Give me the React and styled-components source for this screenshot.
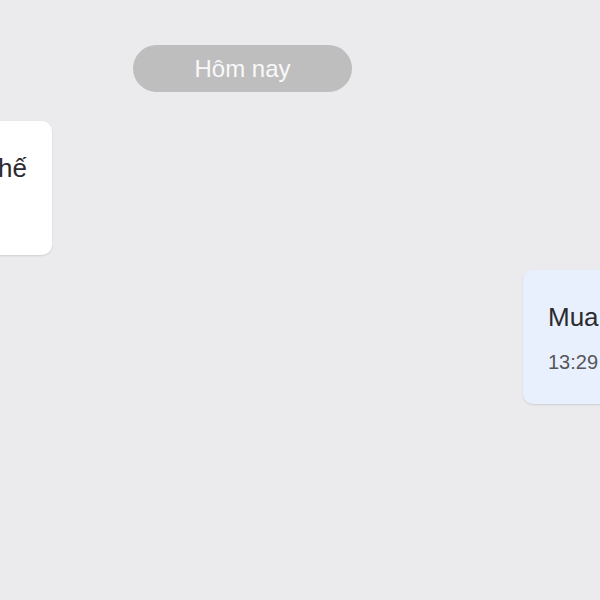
import React from "react";
import styled, { createGlobalStyle } from "styled-components";

const GlobalStyle = createGlobalStyle`
  html, body {
    margin: 0;
    padding: 0;
    background: #ebebee;
  }
  body {
    font-family: "Liberation Sans", Arial, sans-serif;
  }
`;

const Chat = styled.div`
  width: 600px;
  height: 600px;
  box-sizing: border-box;
  padding-top: 45px;
  background: #ebebee;
  overflow: hidden;
  display: flex;
  flex-direction: column;
`;

const DateRow = styled.div`
  display: flex;
  padding-left: 133px;
`;

const DatePill = styled.div`
  width: 219px;
  height: 47px;
  border-radius: 24px;
  background: #bebebf;
  color: #f9f9f9;
  font-size: 24px;
  display: flex;
  align-items: center;
  justify-content: center;
`;

const Row = styled.div`
  display: flex;
  justify-content: ${(p) => (p.$mine ? "flex-start" : "flex-end")};
  width: ${(p) => (p.$mine ? "auto" : "52px")};
  padding-left: ${(p) => (p.$mine ? "523px" : "0")};
  margin-top: ${(p) => p.$gap}px;
`;

const Bubble = styled.div`
  flex-shrink: 0;
  box-sizing: border-box;
  height: 134px;
  padding: 31px 25px 0;
  border-radius: 10px;
  background: ${(p) => (p.$mine ? "#e9f0fd" : "#ffffff")};
  box-shadow: 0 1px 2px rgba(0, 0, 0, 0.12);
  white-space: nowrap;
`;

const Text = styled.div`
  font-size: 26px;
  line-height: 32px;
  color: #2b2b2f;
`;

const Time = styled.div`
  margin-top: 17px;
  font-size: 20px;
  line-height: 24px;
  color: #55565a;
`;

export default function App() {
  return (
    <>
      <GlobalStyle />
      <Chat>
        <DateRow>
          <DatePill>Hôm nay</DatePill>
        </DateRow>
        <Row $gap={29}>
          <Bubble>
            <Text>Giá bao nhiêu thế</Text>
            <Time>13:28</Time>
          </Bubble>
        </Row>
        <Row $mine $gap={15}>
          <Bubble $mine>
            <Text>Mua 2 cái</Text>
            <Time>13:29</Time>
          </Bubble>
        </Row>
      </Chat>
    </>
  );
}
